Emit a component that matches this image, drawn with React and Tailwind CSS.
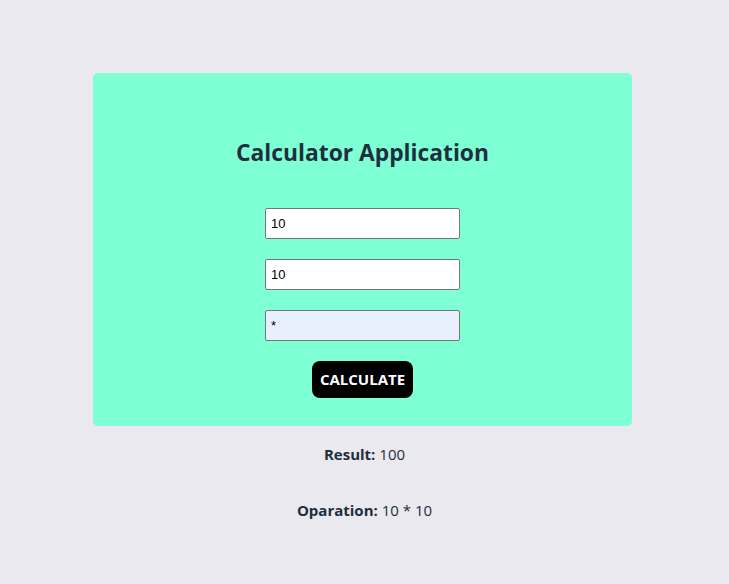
export default function App() {
  return (
    <div className="min-h-[584px] bg-[#eae9ef] pt-[73px]" style={{ fontFamily: '"Open Sans", "Noto Sans", sans-serif' }}>
      <div className="ml-[93px] w-[539px] h-[353px] rounded-[5px] bg-[#7fffd4] flex flex-col items-center">
        <h1 className="mt-[64px] text-[22.8px] leading-[32px] font-bold text-[#1e2e3e]">Calculator Application</h1>
        <input defaultValue="10" className="mt-[39px] w-[195px] h-[31px] bg-white border border-[#767676] rounded-[2px] px-[5px] text-[13px] text-black outline-none" style={{ fontFamily: '"Liberation Sans", Arial, sans-serif' }} />
        <input defaultValue="10" className="mt-[20px] w-[195px] h-[31px] bg-white border border-[#767676] rounded-[2px] px-[5px] text-[13px] text-black outline-none" style={{ fontFamily: '"Liberation Sans", Arial, sans-serif' }} />
        <input defaultValue="*" className="mt-[20px] w-[195px] h-[31px] bg-[#e8f0fe] border border-[#767676] rounded-[2px] px-[5px] text-[13px] text-black outline-none" style={{ fontFamily: '"Liberation Sans", Arial, sans-serif' }} />
        <button className="mt-[20px] w-[101px] h-[37px] rounded-[8px] bg-black text-white text-[15px] font-bold">CALCULATE</button>
      </div>
      <p className="mt-[17px] text-center text-[15px] leading-[22px] text-[#1e2e3e]"><span className="font-bold">Result:</span> 100</p>
      <p className="mt-[34px] text-center text-[15px] leading-[22px] text-[#1e2e3e]"><span className="font-bold">Oparation:</span> 10 * 10</p>
    </div>
  );
}
